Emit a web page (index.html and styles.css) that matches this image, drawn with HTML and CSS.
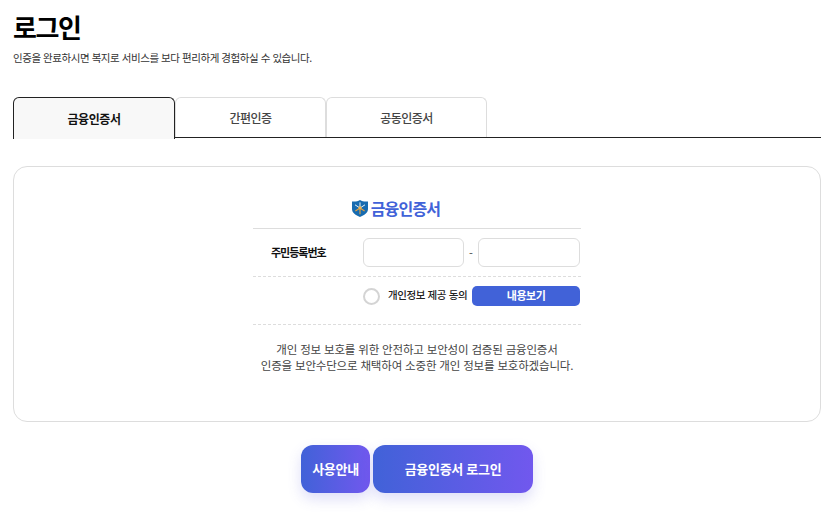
FILE: index.html
```html
<!DOCTYPE html>
<html lang="ko">
<head>
<meta charset="utf-8">
<title>로그인</title>
<link rel="stylesheet" href="styles.css">
</head>
<body>
<main class="page">
  <h1 class="title">로그인</h1>
  <p class="subtitle">인증을 완료하시면 복지로 서비스를 보다 편리하게 경험하실 수 있습니다.</p>
  <div class="tabs">
    <button class="tab tab-active">금융인증서</button>
    <button class="tab tab-second">간편인증</button>
    <button class="tab tab-third">공동인증서</button>
  </div>
  <section class="card">
    <div class="inner">
      <h2 class="cert-title">
        <svg class="shield" width="16" height="17" viewBox="0 0 16 17">
          <path d="M0 1.4 C3 1.9 5.6 1.4 8 0 C10.4 1.4 13 1.9 16 1.4 V9 C16 12.8 12.2 15.4 8 17 C3.8 15.4 0 12.8 0 9 Z" fill="#176bb0"/>
          <path d="M8 2.4 V8 M3 4.8 L8 8 M13 4.8 L8 8" stroke="#e6f1f6" stroke-width="1" fill="none"/>
          <path d="M8 8 V14.2 M8 8 L3.4 11 M8 8 L12.6 11" stroke="#e9a23c" stroke-width="1.1" fill="none"/>
          <circle cx="8" cy="7.8" r="1.5" fill="#f0b24a"/>
        </svg>
        <span>금융인증서</span>
      </h2>
      <div class="row-id">
        <label class="id-label">주민등록번호</label>
        <div class="id-inputs">
          <input class="id-input id-first" type="text">
          <span class="dash">-</span>
          <input class="id-input id-second" type="text">
        </div>
      </div>
      <div class="row-agree">
        <span class="radio"></span>
        <span class="agree-text">개인정보 제공 동의</span>
        <button class="view-btn">내용보기</button>
      </div>
      <p class="notice">개인 정보 보호를 위한 안전하고 보안성이 검증된 금융인증서<br>인증을 보안수단으로 채택하여 소중한 개인 정보를 보호하겠습니다.</p>
    </div>
  </section>
  <div class="actions">
    <button class="action action-guide">사용안내</button>
    <button class="action action-login">금융인증서 로그인</button>
  </div>
</main>
</body>
</html>
```

FILE: styles.css
```css
* { box-sizing: border-box; }
html, body { margin: 0; padding: 0; background: #fff; }
body {
  font-family: "Noto Sans CJK KR", "Noto Sans", sans-serif;
  color: #111;
  overflow: hidden;
}
.page {
  width: 832px;
  height: 525px;
  padding: 9px 11px 0 13px;
}
.title {
  margin: 0;
  font-size: 26px;
  line-height: 36px;
  font-weight: 700;
  letter-spacing: -1.4px;
  color: #000;
}
.subtitle {
  margin: 5px 0 0;
  font-size: 10.5px;
  line-height: 16px;
  letter-spacing: -0.45px;
  color: #333;
}
.tabs {
  display: flex;
  margin-top: 31px;
  height: 41px;
  border-bottom: 1px solid #222;
}
.tab {
  height: 40px;
  padding: 0;
  background: #fff;
  border: 1px solid #ddd;
  border-bottom: 0;
  border-radius: 6px 6px 0 0;
  font: 500 12px/1 "Noto Sans CJK KR", sans-serif;
  letter-spacing: -0.5px;
  color: #444;
}
.tab-active {
  width: 162px;
  height: 42px;
  background: #f8f8f8;
  border-color: #222;
  font-weight: 700;
  letter-spacing: -0.45px;
  color: #111;
}
.tab-second { width: 151px; }
.tab-third { width: 161px; }
.card {
  margin-top: 28px;
  height: 256px;
  border: 1px solid #ddd;
  border-radius: 14px;
  display: flex;
  justify-content: center;
}
.inner { width: 328px; }
.cert-title {
  margin: 0;
  height: 62px;
  padding: 21px 42px 0 0;
  border-bottom: 1px solid #ddd;
  display: flex;
  align-items: center;
  justify-content: center;
  gap: 3px;
  font-size: 16px;
  line-height: 20px;
  font-weight: 700;
  letter-spacing: -0.8px;
  color: #4162d8;
}
.shield { flex: none; }
.row-id {
  height: 48px;
  display: flex;
  align-items: center;
  border-bottom: 1px dashed #ddd;
}
.id-label {
  width: 110px;
  padding: 0 0 2px 18px;
  font-size: 11px;
  font-weight: 700;
  letter-spacing: -1px;
  color: #111;
}
.id-inputs { display: flex; align-items: center; }
.id-input {
  width: 101px;
  height: 29px;
  border: 1px solid #ddd;
  border-radius: 6px;
  background: #fff;
  padding: 0;
}
.id-second { width: 102px; }
.dash {
  width: 14px;
  text-align: center;
  font-size: 11px;
  color: #444;
}
.row-agree {
  height: 48px;
  padding: 9px 1px 0 111px;
  display: flex;
  align-items: flex-start;
  border-bottom: 1px dashed #ddd;
}
.radio {
  width: 17px;
  height: 17px;
  margin: 2px 0 0 -1px;
  border: 2px solid #d4d4d4;
  border-radius: 50%;
  background: #fff;
  flex: none;
}
.agree-text {
  margin-left: 8px;
  font-size: 10.5px;
  line-height: 18px;
  font-weight: 500;
  letter-spacing: -0.4px;
  white-space: nowrap;
  color: #222;
}
.view-btn {
  width: 108px;
  height: 20px;
  margin-left: 5px;
  padding: 0 0 2px;
  border: 0;
  border-radius: 5px;
  background: #4162d8;
  color: #fff;
  font: 700 11px/18px "Noto Sans CJK KR", sans-serif;
  letter-spacing: -0.5px;
}
.notice {
  margin: 16px 0 0;
  font-size: 11.5px;
  line-height: 16px;
  text-align: center;
  letter-spacing: -0.18px;
  color: #444;
  white-space: nowrap;
}
.actions {
  margin-top: 23px;
  display: flex;
  justify-content: center;
  gap: 3px;
}
.action {
  height: 48px;
  padding: 0;
  border: 0;
  border-radius: 12px;
  background: linear-gradient(90deg, #4162d8, #7158ee);
  box-shadow: 0 6px 14px rgba(90, 90, 220, .2);
  color: #fff;
  font: 700 13px/46px "Noto Sans CJK KR", sans-serif;
  letter-spacing: -0.3px;
}
.action-guide { width: 69px; }
.action-login { width: 160px; }
```
